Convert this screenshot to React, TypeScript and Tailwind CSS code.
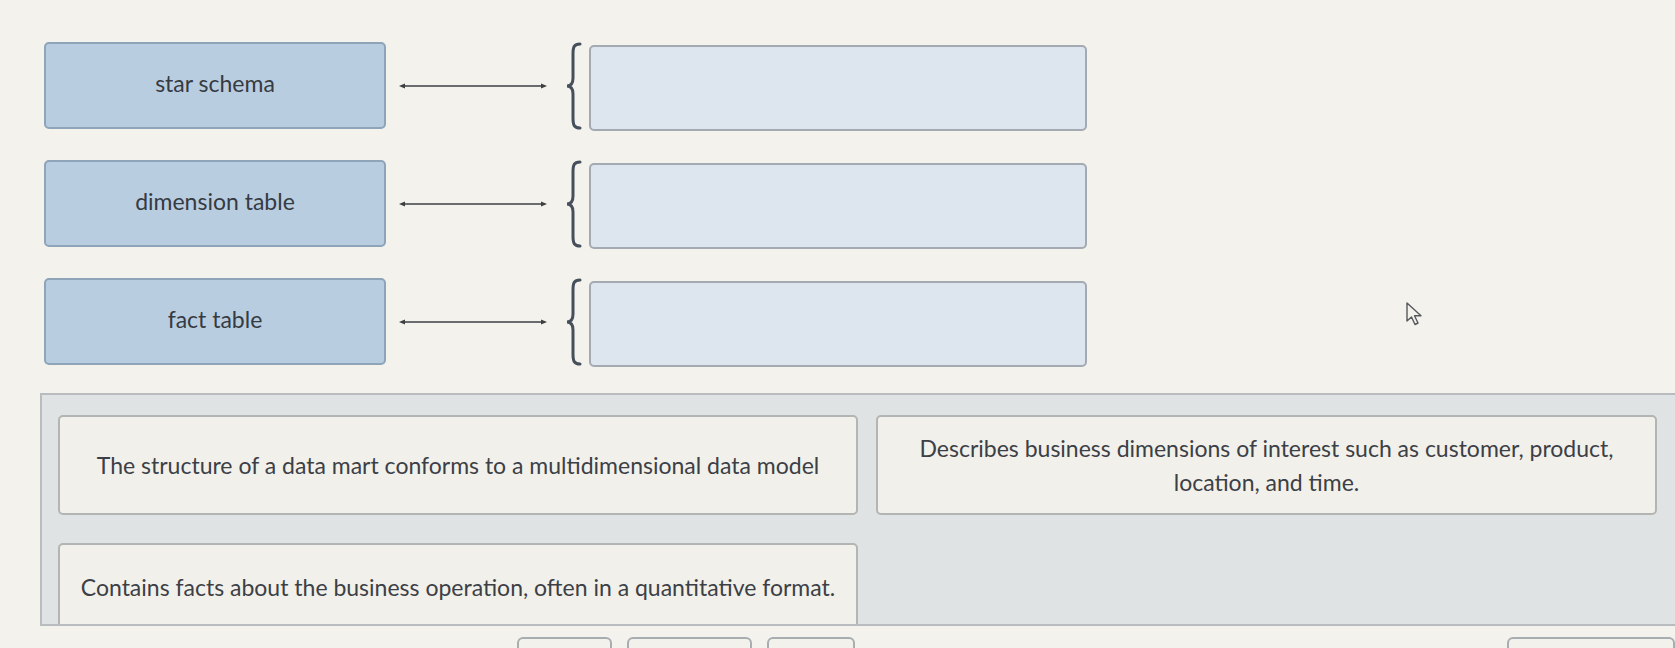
import React from 'react';

const terms = ['star schema', 'dimension table', 'fact table'];

const Arrow = () => (
  <svg width="148" height="10" viewBox="0 0 148 10" className="shrink-0">
    <line x1="3" y1="5" x2="145" y2="5" stroke="#3b3f44" strokeWidth="1.6" />
    <path d="M0 5 L6 2.5 L6 7.5 Z" fill="#3b3f44" />
    <path d="M148 5 L142 2.5 L142 7.5 Z" fill="#3b3f44" />
  </svg>
);

const Brace = () => (
  <svg width="18" height="88" viewBox="0 0 18 88" className="shrink-0">
    <path
      d="M15 2 C9 2 8 5 8 12 L8 36 C8 41 6 44 2 44 C6 44 8 47 8 52 L8 76 C8 83 9 86 15 86"
      fill="none"
      stroke="#46505c"
      strokeWidth="3"
      strokeLinecap="round"
    />
  </svg>
);

const Cursor = () => (
  <svg width="20" height="26" viewBox="0 0 20 26">
    <path
      d="M2 2 L2 20 L6.5 16 L10 23.5 L13 22 L9.5 14.8 L16 14.8 Z"
      fill="#f3f1ec"
      stroke="#55595e"
      strokeWidth="1.4"
      strokeLinejoin="round"
    />
  </svg>
);

const Card = ({ children, className = '' }: { children: React.ReactNode; className?: string }) => (
  <div
    className={`h-[100px] rounded-[5px] border-2 border-[#b3b5b4] bg-[#f2f0ea] px-[8px] flex items-center justify-center text-center text-[23px] leading-[34px] text-[#3c4046] ${className}`}
  >
    {children}
  </div>
);

export default function App() {
  return (
    <div
      className="w-[1675px] h-[648px] overflow-hidden bg-[#f4f2ec] flex flex-col"
      style={{ fontFamily: 'Lato, "Open Sans", sans-serif' }}
    >
      <div className="h-[2px] bg-gradient-to-r from-[#f3f1ec] via-[#c9ccd0] to-[#9aa4ae]" />

      <div className="flex">
        <div className="flex flex-col gap-[31px] pt-[42px] pl-[44px]">
          {terms.map(t => (
            <div key={t} className="flex items-center h-[87px]">
              <div className="w-[342px] h-full rounded-[5px] border-2 border-[#8ea4b9] bg-[#b9cde1] flex items-center justify-center text-[23px] text-[#363b42] pb-[5px]">
                {t}
              </div>
              <div className="ml-[13px] mr-[18px]">
                <Arrow />
              </div>
              <Brace />
              <div className="ml-[6px] mt-[4px] w-[498px] h-[86px] rounded-[5px] border-2 border-[#a3aab1] bg-[#dde5ef]" />
            </div>
          ))}
        </div>
        <div className="pl-[318px] pt-[301px]">
          <Cursor />
        </div>
      </div>

      <div className="mt-[28px] ml-[40px] h-[233px] shrink-0 border-t-2 border-l-2 border-b-2 border-[#b8bcbf] bg-[#dfe3e4] pl-[16px] pr-[18px] pt-[20px] overflow-hidden">
        <div className="grid grid-cols-[800px_1fr] gap-x-[18px] gap-y-[28px]">
          <Card>The structure of a data mart conforms to a multidimensional data model</Card>
          <Card>
            Describes business dimensions of interest such as customer, product,
            <br />
            location, and time.
          </Card>
          <Card className="pb-[12px]">
            <span className="whitespace-nowrap">Contains facts about the business operation, often in a quantitative format.</span>
          </Card>
        </div>
      </div>

      <div className="flex items-start pt-[11px]">
        <div className="ml-[517px] w-[96px] h-[30px] rounded-t-[6px] border-2 border-[#a8adb2] bg-[#f3f1ec]" />
        <div className="ml-[15px] w-[127px] h-[30px] rounded-t-[6px] border-2 border-[#a8adb2] bg-[#f3f1ec]" />
        <div className="ml-[15px] w-[89px] h-[30px] rounded-t-[6px] border-2 border-[#a8adb2] bg-[#f3f1ec]" />
        <div className="ml-[652px] w-[170px] h-[30px] rounded-t-[6px] border-2 border-[#a8adb2] bg-[#f3f1ec]" />
      </div>
    </div>
  );
}
